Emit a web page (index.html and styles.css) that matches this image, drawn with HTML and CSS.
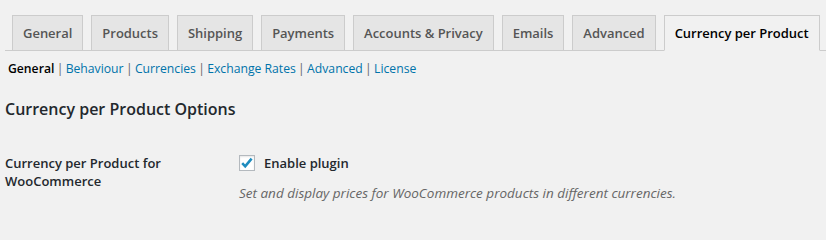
FILE: index.html
```html
<!DOCTYPE html>
<html lang="en">
<head>
<meta charset="utf-8">
<title>Currency per Product</title>
<link rel="stylesheet" href="styles.css">
</head>
<body>
<div class="wrap">
  <nav class="tabs">
    <a class="tab" href="#">General</a>
    <a class="tab" href="#">Products</a>
    <a class="tab" href="#">Shipping</a>
    <a class="tab" href="#">Payments</a>
    <a class="tab" href="#">Accounts &amp; Privacy</a>
    <a class="tab" href="#">Emails</a>
    <a class="tab" href="#">Advanced</a>
    <a class="tab tab-active" href="#">Currency per Product</a>
  </nav>
  <ul class="subsub">
    <li><a class="current" href="#">General</a></li>
    <li><span class="sep">|</span><a href="#">Behaviour</a></li>
    <li><span class="sep">|</span><a href="#">Currencies</a></li>
    <li><span class="sep">|</span><a href="#">Exchange Rates</a></li>
    <li><span class="sep">|</span><a href="#">Advanced</a></li>
    <li><span class="sep">|</span><a href="#">License</a></li>
  </ul>
  <h2 class="section-title">Currency per Product Options</h2>
  <div class="form-row">
    <div class="form-label">Currency per Product for WooCommerce</div>
    <div class="form-field">
      <label class="check-label">
        <span class="checkbox">
          <svg viewBox="0 0 16 16" width="16" height="16" aria-hidden="true"><path d="M3.2 8.2 L6.2 11.3 L12.6 3.6" fill="none" stroke="#1e8cbe" stroke-width="2.6" stroke-linecap="butt" stroke-linejoin="miter"/></svg>
        </span>
        Enable plugin
      </label>
      <p class="description">Set and display prices for WooCommerce products in different currencies.</p>
    </div>
  </div>
</div>
</body>
</html>
```

FILE: styles.css
```css
html, body {
  margin: 0;
  padding: 0;
  background: #f1f1f1;
}
body {
  font-family: "Open Sans", "Noto Sans", sans-serif;
  color: #23282d;
  font-size: 13px;
}
.wrap {
  padding-left: 5px;
}
.tabs {
  display: flex;
  margin-top: 15px;
  padding-left: 7px;
  border-bottom: 1px solid #ccc;
  gap: 8px;
}
.tab {
  display: block;
  border: 1px solid #ccc;
  border-bottom: none;
  padding: 5px 10px;
  font-size: 13px;
  letter-spacing: -0.02px;
  line-height: 24px;
  font-weight: 600;
  background: #e5e5e5;
  color: #555;
  text-decoration: none;
  white-space: nowrap;
}
.tab-active {
  background: #f1f1f1;
  color: #000;
  margin-bottom: -1px;
  border-bottom: 1px solid #f1f1f1;
}
.subsub {
  list-style: none;
  display: flex;
  margin: 7px 0 0 3px;
  padding: 0;
  font-size: 12.2px;
  line-height: 22px;
  color: #666;
}
.subsub a {
  color: #0073aa;
  text-decoration: none;
}
.subsub a.current {
  color: #000;
  font-weight: 600;
}
.sep {
  margin: 0 2.3px;
}
.section-title {
  margin: 17px 0 0;
  font-size: 16px;
  line-height: 24px;
  font-weight: 600;
  color: #23282d;
}
.form-row {
  display: grid;
  grid-template-columns: 234px 1fr;
  margin-top: 33px;
}
.form-label {
  font-size: 13px;
  font-weight: 600;
  line-height: 18px;
  width: 180px;
  color: #23282d;
}
.check-label {
  display: flex;
  align-items: center;
  gap: 9px;
  font-size: 13px;
  font-weight: 600;
  line-height: 18px;
  color: #23282d;
}
.checkbox {
  display: block;
  width: 14px;
  height: 14px;
  border: 1px solid #b4b9be;
  background: #fff;
  box-shadow: inset 0 1px 2px rgba(0,0,0,.1);
  position: relative;
}
.checkbox svg {
  position: absolute;
  left: -1px;
  top: -1px;
}
.description {
  margin: 12px 0 0;
  font-size: 13.5px;
  font-style: italic;
  line-height: 18px;
  color: #666;
}
```
